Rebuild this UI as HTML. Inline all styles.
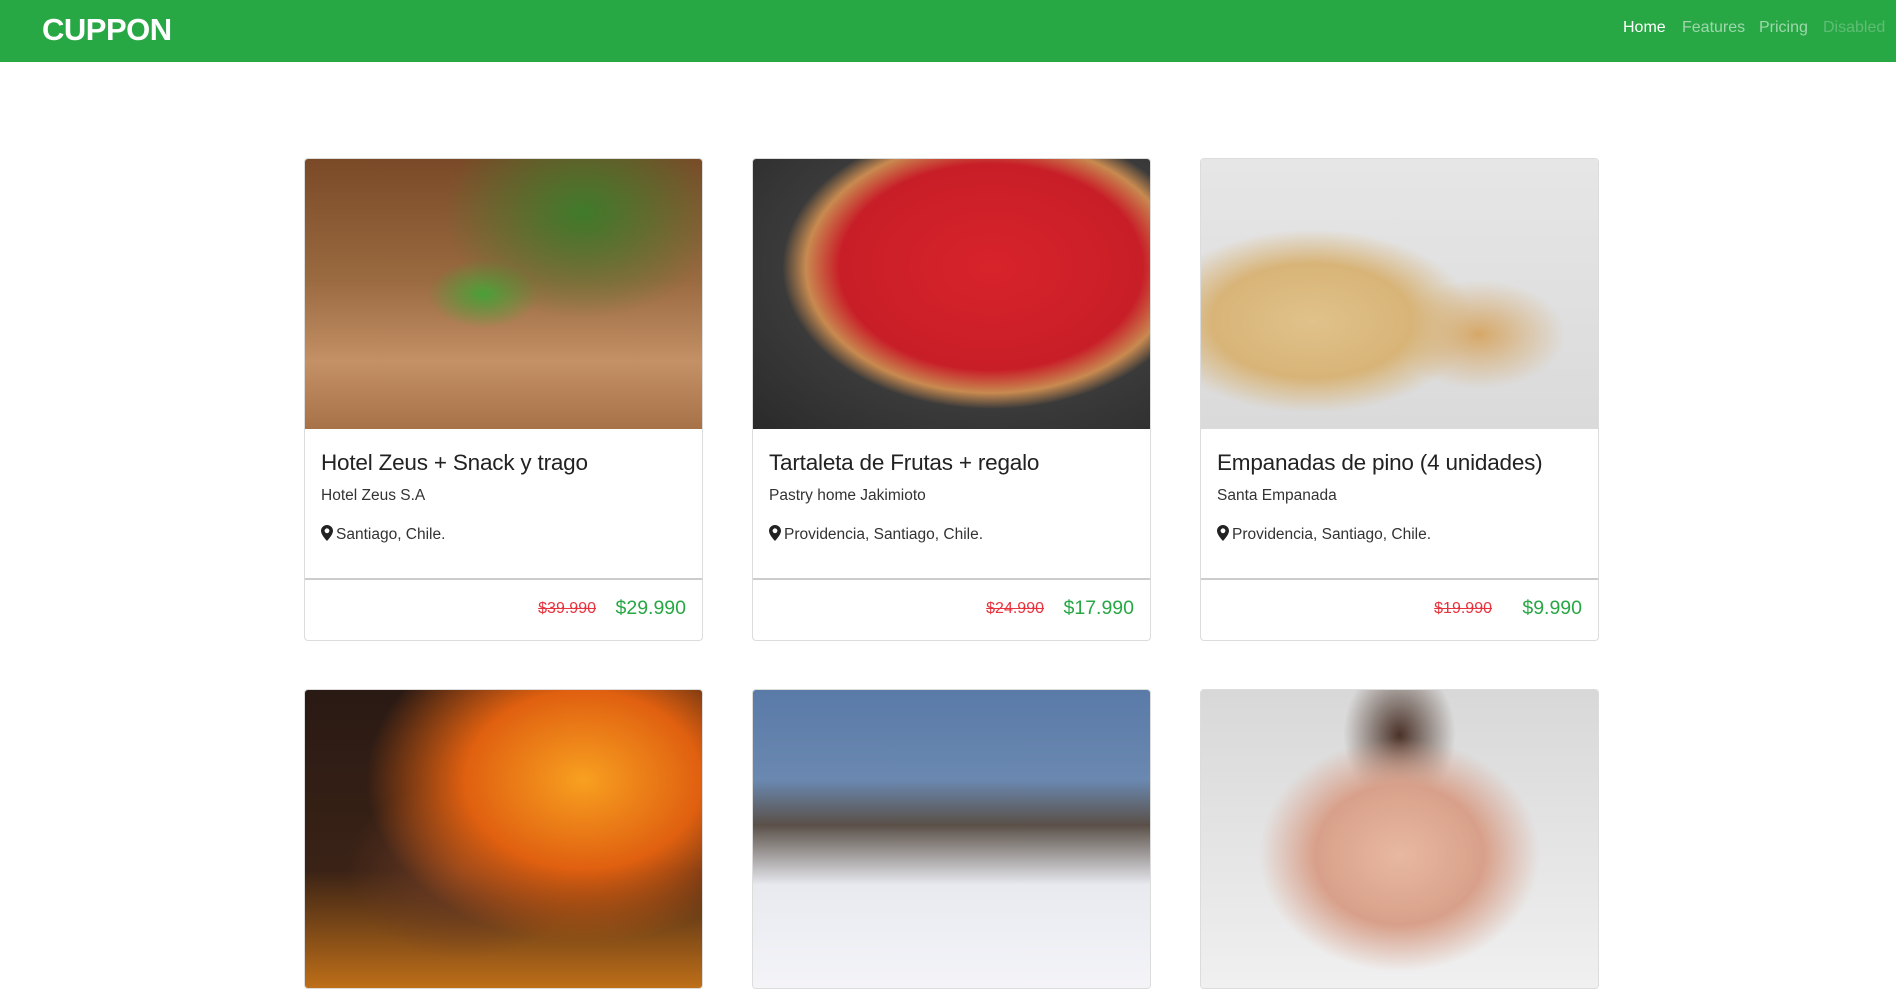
<!DOCTYPE html>
<html><head><meta charset="utf-8"><style>
*{margin:0;padding:0;box-sizing:border-box}
body{width:1896px;height:963px;overflow:hidden;background:#fff;font-family:"Liberation Sans",sans-serif;position:relative}
.nav{position:absolute;left:0;top:0;width:1896px;height:62px;background:#28a745}
.logo{position:absolute;left:42px;top:12px;font-size:31px;font-weight:bold;color:#fff;letter-spacing:-0.5px}
.nl{position:absolute;top:19px;font-size:16px;color:rgba(255,255,255,.55)}
.card{position:absolute;width:399px;border:1px solid #dcdcdc;border-radius:4px;overflow:hidden;background:#fff}
.img{height:270px}
.t{position:absolute;left:16px;top:291px;font-size:22.5px;color:#222;white-space:nowrap;letter-spacing:-0.2px}
.s{position:absolute;left:16px;top:328px;font-size:15.5px;color:#333;white-space:nowrap}
.l{position:absolute;left:16px;top:366px;font-size:15.5px;color:#333;white-space:nowrap}
.l svg{vertical-align:-2px;margin-right:3px}
.div{position:absolute;left:0;right:0;top:419px;border-top:2px solid #ccc}
.op{position:absolute;right:106px;top:441px;font-size:16px;color:#e8323c;text-decoration:line-through}
.np{position:absolute;right:16px;top:438px;font-size:19.5px;color:#28a745}
</style></head><body>
<div class="nav"><div class="logo">CUPPON</div>
<div class="nl" style="left:1623px;color:#fff">Home</div>
<div class="nl" style="left:1682px">Features</div>
<div class="nl" style="left:1759px">Pricing</div>
<div class="nl" style="left:1823px;color:rgba(255,255,255,.25)">Disabled</div></div>

<div class="card" style="left:304px;top:158px;height:483px">
<div class="img" style="background:radial-gradient(ellipse at 70% 20%,#3f7a2a 0,transparent 35%),radial-gradient(ellipse at 45% 50%,#4aa038 0,transparent 18%),linear-gradient(180deg,#7a4a28 0,#9a6a40 45%,#c49066 75%,#a87248 100%)"></div>
<div class="t">Hotel Zeus + Snack y trago</div><div class="s">Hotel Zeus S.A</div>
<div class="l"><svg width="12" height="16" viewBox="0 0 12 16"><path d="M6 0C2.7 0 0 2.6 0 5.8 0 10 6 16 6 16s6-6 6-10.2C12 2.6 9.3 0 6 0zm0 8.2A2.4 2.4 0 1 1 6 3.4a2.4 2.4 0 0 1 0 4.8z" fill="#222"/></svg>Santiago, Chile.</div>
<div class="div"></div><div class="op">$39.990</div><div class="np">$29.990</div></div>

<div class="card" style="left:752px;top:158px;height:483px">
<div class="img" style="background:radial-gradient(ellipse at 60% 40%,#d8232a 0,#c81e28 45%,#c88a50 55%,#3a3a3a 62%,#2a2a2a 100%)"></div>
<div class="t">Tartaleta de Frutas + regalo</div><div class="s">Pastry home Jakimioto</div>
<div class="l"><svg width="12" height="16" viewBox="0 0 12 16"><path d="M6 0C2.7 0 0 2.6 0 5.8 0 10 6 16 6 16s6-6 6-10.2C12 2.6 9.3 0 6 0zm0 8.2A2.4 2.4 0 1 1 6 3.4a2.4 2.4 0 0 1 0 4.8z" fill="#222"/></svg>Providencia, Santiago, Chile.</div>
<div class="div"></div><div class="op">$24.990</div><div class="np">$17.990</div></div>

<div class="card" style="left:1200px;top:158px;height:483px">
<div class="img" style="background:radial-gradient(ellipse at 28% 60%,#e0c28a 0,#d8b478 25%,transparent 40%),radial-gradient(ellipse at 70% 65%,#d6a868 0,transparent 22%),linear-gradient(180deg,#e6e6e6,#dadada)"></div>
<div class="t">Empanadas de pino (4 unidades)</div><div class="s">Santa Empanada</div>
<div class="l"><svg width="12" height="16" viewBox="0 0 12 16"><path d="M6 0C2.7 0 0 2.6 0 5.8 0 10 6 16 6 16s6-6 6-10.2C12 2.6 9.3 0 6 0zm0 8.2A2.4 2.4 0 1 1 6 3.4a2.4 2.4 0 0 1 0 4.8z" fill="#222"/></svg>Providencia, Santiago, Chile.</div>
<div class="div"></div><div class="op">$19.990</div><div class="np">$9.990</div></div>

<div class="card" style="left:304px;top:689px;height:300px">
<div class="img" style="height:300px;background:radial-gradient(ellipse at 70% 30%,#f8a020 0,#e06010 30%,transparent 55%),radial-gradient(ellipse at 40% 60%,#6a3a24 0,transparent 35%),linear-gradient(180deg,#2a1a14,#3a2216 60%,#c07018 100%)"></div></div>
<div class="card" style="left:752px;top:689px;height:300px">
<div class="img" style="height:300px;background:linear-gradient(180deg,#5a7aa8 0,#6a88b0 30%,#5a5048 45%,#e8eaf0 65%,#f4f4f8 100%)"></div></div>
<div class="card" style="left:1200px;top:689px;height:300px">
<div class="img" style="height:300px;background:radial-gradient(ellipse at 50% 55%,#e8b8a0 0,#d8a08a 30%,transparent 50%),radial-gradient(ellipse at 50% 15%,#4a3228 0,transparent 20%),linear-gradient(180deg,#d8d8d8,#f0f0f0)"></div></div>
</body></html>
